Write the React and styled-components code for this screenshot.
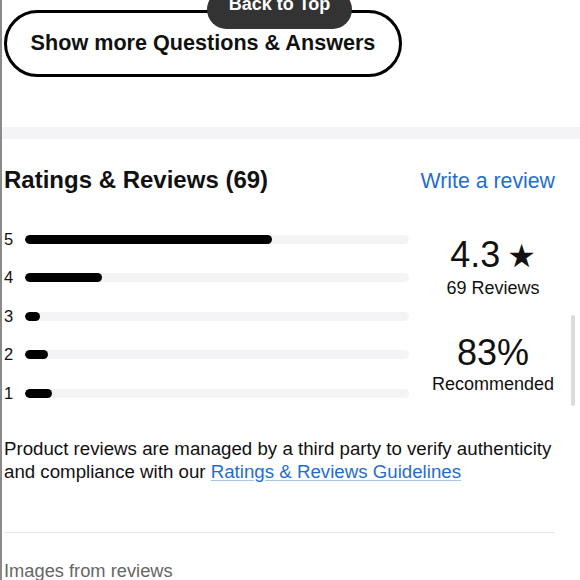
import React from "react";
import styled, { createGlobalStyle } from "styled-components";

const Global = createGlobalStyle`
  html, body { margin: 0; padding: 0; background: #fff; }
  body {
    font-family: "Liberation Sans", Arial, Helvetica, sans-serif;
    color: #111;
    overflow: hidden;
  }
`;

const Page = styled.div`
  position: relative;
  width: 580px;
  height: 580px;
  overflow: hidden;
  border-left: 2px solid #8a8a8a;
  box-sizing: border-box;
`;

const BackToTop = styled.div`
  position: absolute;
  left: 205px;
  top: -10px;
  width: 145px;
  height: 39px;
  box-sizing: border-box;
  border-radius: 20px;
  background: #333333;
  color: #fff;
  font-weight: 700;
  font-size: 18px;
  line-height: 20px;
  display: flex;
  align-items: flex-end;
  justify-content: center;
  padding-bottom: 15px;
  z-index: 2;
`;

const TopSection = styled.div`
  padding: 10px 0 0 2px;
  height: 127px;
  box-sizing: border-box;
`;

const ShowMore = styled.button`
  width: 398px;
  height: 67px;
  box-sizing: border-box;
  border: 3px solid #000;
  border-radius: 34px;
  background: #fff;
  color: #111;
  font-family: "Liberation Sans", Arial, sans-serif;
  font-weight: 700;
  font-size: 21.6px;
  display: flex;
  align-items: center;
  justify-content: center;
  padding: 0 0 2px;
`;

const Band = styled.div`
  height: 12px;
  background: #f4f4f6;
`;

const Section = styled.section`
  padding: 0 0 0 2px;
  width: 553px;
`;

const Header = styled.div`
  display: flex;
  justify-content: space-between;
  align-items: baseline;
  margin-top: 27px;
  height: 28px;
`;

const Title = styled.h2`
  margin: 0;
  font-size: 24px;
  line-height: 28px;
  font-weight: 700;
  color: #111;
`;

const WriteLink = styled.a`
  font-size: 21.3px;
  color: #1f6ecf;
  text-decoration: none;
  margin-right: 2px;
`;

const Body = styled.div`
  display: flex;
  gap: 20px;
  margin-top: 26px;
`;

const Bars = styled.div`
  width: 405px;
  display: flex;
  flex-direction: column;
`;

const Row = styled.div`
  display: flex;
  align-items: center;
  height: 38.5px;
`;

const Label = styled.span`
  width: 21px;
  font-size: 16.5px;
  color: #111;
`;

const Track = styled.div`
  flex: 1;
  height: 9px;
  border-radius: 5px;
  background: #f4f4f6;
  overflow: hidden;
`;

const Fill = styled.div`
  height: 100%;
  border-radius: 5px;
  background: #000;
`;

const Summary = styled.div`
  flex: 1;
  display: flex;
  flex-direction: column;
  align-items: center;
  padding-top: 16px;
  gap: 35px;
`;

const Stat = styled.div`
  display: flex;
  flex-direction: column;
  align-items: center;
  gap: 3px;
`;

const Big = styled.div`
  font-size: 36px;
  line-height: 37px;
  color: #111;
  white-space: nowrap;
`;

const Star = styled.span`
  font-family: "DejaVu Sans", sans-serif;
  font-size: 32px;
  margin-left: 7px;
`;

const Small = styled.div`
  font-size: 18px;
  line-height: 21px;
  color: #111;
`;

const Disclaimer = styled.p`
  margin: 24px 0 0;
  font-size: 18.7px;
  line-height: 23px;
  color: #111;
  width: 570px;
`;

const Guide = styled.a`
  color: #1f6ecf;
  text-decoration: underline;
  text-decoration-color: #a9c4ea;
  text-underline-offset: 2px;
`;

const Divider = styled.hr`
  margin: 49px 0 0;
  border: none;
  border-top: 1px solid #e8e8ea;
  width: 551px;
`;

const SubHead = styled.div`
  margin-top: 27px;
  font-size: 18.3px;
  line-height: 21px;
  color: #666;
`;

const Scrollbar = styled.div`
  position: absolute;
  left: 569px;
  top: 315px;
  width: 4px;
  height: 91px;
  border-radius: 2px;
  background: #dcdcdc;
`;

const rows = [
  { n: 5, w: 247 },
  { n: 4, w: 77 },
  { n: 3, w: 15 },
  { n: 2, w: 23 },
  { n: 1, w: 27 },
];

export default function App() {
  return (
    <>
      <Global />
      <Page>
        <BackToTop>Back to Top</BackToTop>
        <TopSection>
          <ShowMore>Show more Questions &amp; Answers</ShowMore>
        </TopSection>
        <Band />
        <Section>
          <Header>
            <Title>Ratings &amp; Reviews (69)</Title>
            <WriteLink href="#">Write a review</WriteLink>
          </Header>
          <Body>
            <Bars>
              {rows.map((r) => (
                <Row key={r.n}>
                  <Label>{r.n}</Label>
                  <Track>
                    <Fill style={{ width: `${(r.w / 384) * 100}%` }} />
                  </Track>
                </Row>
              ))}
            </Bars>
            <Summary>
              <Stat>
                <Big>
                  4.3<Star>★</Star>
                </Big>
                <Small>69 Reviews</Small>
              </Stat>
              <Stat>
                <Big>83%</Big>
                <Small>Recommended</Small>
              </Stat>
            </Summary>
          </Body>
          <Disclaimer>
            Product reviews are managed by a third party to verify authenticity
            and compliance with our{" "}
            <Guide href="#">Ratings &amp; Reviews Guidelines</Guide>
          </Disclaimer>
          <Divider />
          <SubHead>Images from reviews</SubHead>
        </Section>
        <Scrollbar />
      </Page>
    </>
  );
}
